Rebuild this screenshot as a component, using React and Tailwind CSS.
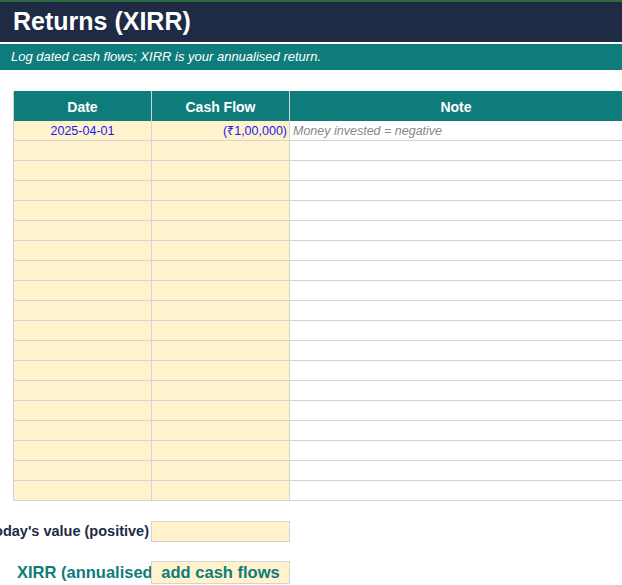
export default function App() {
  const rows = Array.from({ length: 18 });
  const f = { fontFamily: '"Liberation Sans", Arial, sans-serif' };
  return (
    <div style={f} className="w-[622px] h-[585px] overflow-hidden bg-white">
      <div className="h-[2px] bg-[#2e6b3e]" />
      <div className="h-[40px] bg-[#1f2a44] flex items-center pl-[13px] text-white font-bold text-[25px]">Returns (XIRR)</div>
      <div className="h-[2px] bg-white" />
      <div className="h-[26px] bg-[#0e7c7b] flex items-center pl-[11px] text-white italic text-[13px]">Log dated cash flows; XIRR is your annualised return.</div>
      <div className="h-[21px]" />
      <div className="pl-[13px]">
        <div className="flex h-[30px] bg-[#0e7c7b] text-white font-bold text-[14px] border-l border-[#d4d4d4]">
          <div className="w-[138px] flex items-center justify-center border-r border-[#d4d4d4] pt-[2px]">Date</div>
          <div className="w-[138px] flex items-center justify-center border-r border-[#d4d4d4] pt-[2px]">Cash Flow</div>
          <div className="flex-1 flex items-center justify-center pt-[2px]">Note</div>
        </div>
        <div className="flex h-[20px] text-[12.5px] border-l border-b border-[#d4d4d4]">
          <div className="w-[138px] bg-[#fff2cc] flex items-center justify-center text-[#1a1aee] border-r border-[#d4d4d4] pt-[1px]">2025-04-01</div>
          <div className="w-[138px] bg-[#fff2cc] flex items-center justify-end pr-[2px] text-[#1a1aee] border-r border-[#d4d4d4] pt-[1px]">(₹1,00,000)</div>
          <div className="flex-1 flex items-center pl-[3px] italic text-[#888888] pt-[1px]">Money invested = negative</div>
        </div>
        {rows.map((_, i) => (
          <div key={i} className="flex h-[20px] border-l border-b border-[#d4d4d4]">
            <div className="w-[138px] bg-[#fff2cc] border-r border-[#d4d4d4]" />
            <div className="w-[138px] bg-[#fff2cc] border-r border-[#d4d4d4]" />
            <div className="flex-1" />
          </div>
        ))}
      </div>
      <div className="h-[20px]" />
      <div className="flex h-[21px]">
        <div className="w-[151px] overflow-hidden whitespace-nowrap flex justify-end items-center pr-[2px] font-bold text-[14.5px] text-[#1f2a44]">Today's value (positive)</div>
        <div className="w-[139px] bg-[#fff2cc] border border-[#d4d4d4]" />
      </div>
      <div className="h-[19px]" />
      <div className="flex h-[23px]">
        <div className="w-[151px] overflow-hidden whitespace-nowrap flex items-center pl-[17px] font-bold text-[16.5px] text-[#0e7c7b]">XIRR (annualised</div>
        <div className="w-[139px] bg-[#fff2cc] border border-[#d4d4d4] flex items-center justify-center font-bold text-[16.5px] text-[#0e7c7b]">add cash flows</div>
      </div>
    </div>
  );
}
